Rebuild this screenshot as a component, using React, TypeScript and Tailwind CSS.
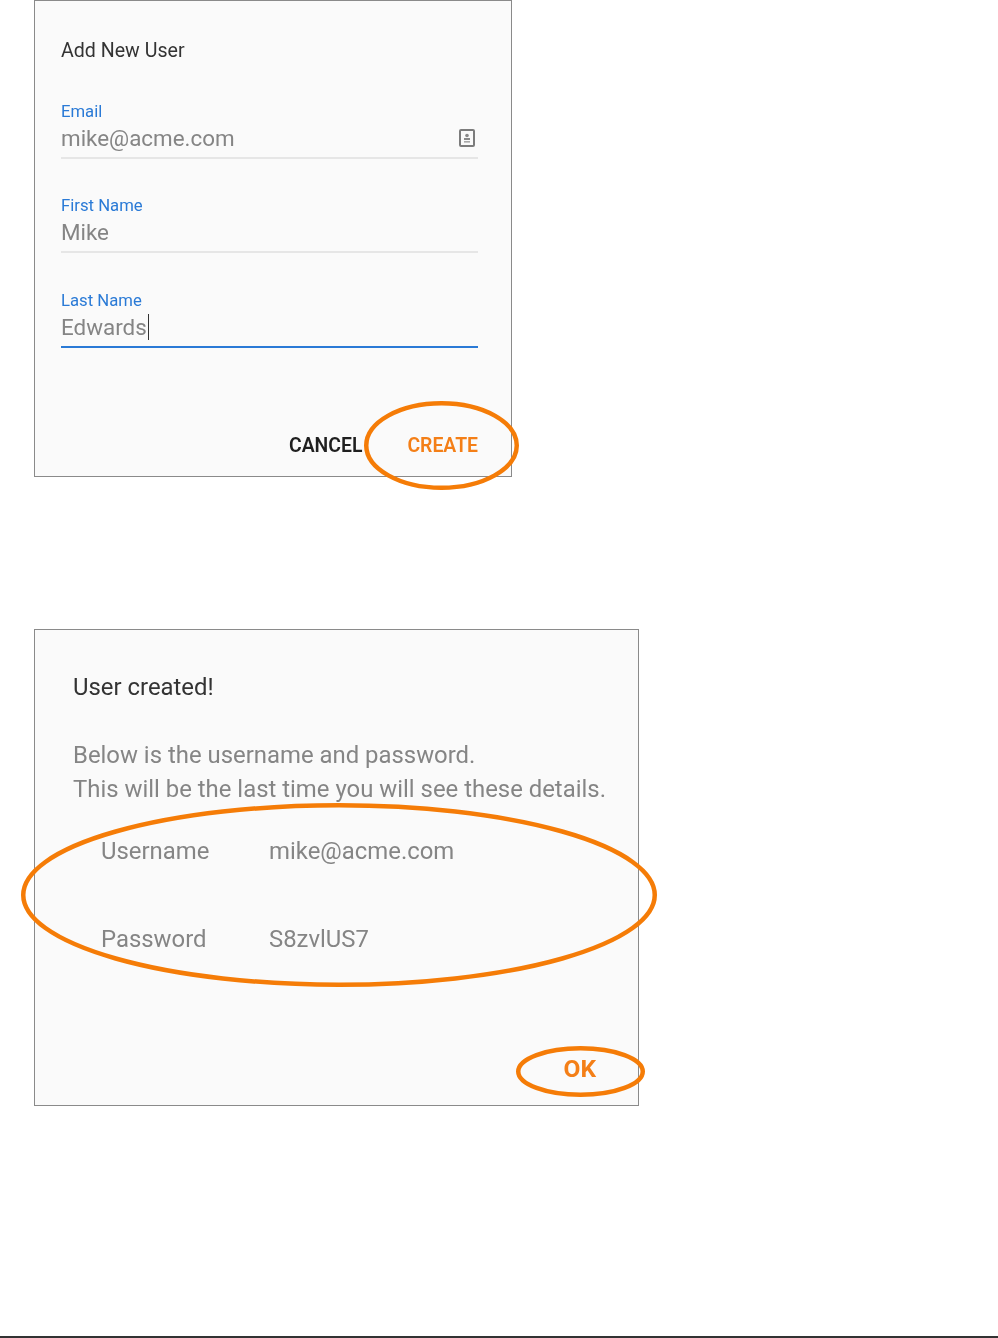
const Field = ({ label, value, active, icon, caret }: { label: string; value: string; active?: boolean; icon?: boolean; caret?: boolean }) => (
  <div className="flex flex-col">
    <div className="h-[23px] text-[16.7px] leading-[23px] text-[#2a7ad6]">{label}</div>
    <div className="flex h-[30px] items-center justify-between text-[22.4px] leading-[30px] text-[#858585]">
      <span className="flex items-center">
        {value}
        {caret && <span className="ml-px inline-block h-[26px] w-px bg-[#333333]" />}
      </span>
      {icon && (
        <svg width="18" height="20" viewBox="0 0 18 20" className="mr-[2px]">
          <rect x="2" y="2" width="14" height="16" rx="1" fill="none" stroke="#7c7c7c" strokeWidth="2" />
          <circle cx="9" cy="7.5" r="1.8" fill="#8a8a8a" />
          <rect x="6" y="10" width="6" height="2" fill="#8a8a8a" />
          <rect x="6" y="13" width="6" height="1.6" fill="#a8a8a8" />
        </svg>
      )}
    </div>
    <div className={active ? "mt-[4px] h-[2px] bg-[#2a7ad6]" : "mt-[4px] h-[2px] bg-[#e6e6e6]"} />
  </div>
);

const Ring = ({ className, w, h, sw }: { className: string; w: number; h: number; sw: number }) => (
  <svg width={w} height={h} viewBox={`0 0 ${w} ${h}`} className={`absolute ${className}`}>
    <ellipse cx={w / 2} cy={h / 2} rx={w / 2 - sw / 2} ry={h / 2 - sw / 2} fill="none" stroke="#f57c07" strokeWidth={sw} />
  </svg>
);

export default function App() {
  return (
    <div className="relative h-[1338px] w-[998px] bg-white font-['Roboto',sans-serif]">
      <div className="ml-[34px] flex h-[477px] w-[478px] flex-col border border-[#8a8a8a] bg-[#fafafa] pl-[26px] pr-[33px]">
        <div className="mt-[37px] h-[26px] text-[19.6px] leading-[26px] text-[#333333] blur-[0.4px]">Add New User</div>
        <div className="mt-[36px] flex flex-col gap-[35.3px] blur-[0.4px]">
          <Field label="Email" value="mike@acme.com" icon />
          <Field label="First Name" value="Mike" />
          <Field label="Last Name" value="Edwards" active caret />
        </div>
        <div className="mt-[85px] flex justify-end gap-[45px] text-[19.4px] font-semibold leading-[26px] blur-[0.4px]">
          <span className="text-[#1f1f1f]">CANCEL</span>
          <span className="text-[#f47f17]">CREATE</span>
        </div>
      </div>
      <div className="ml-[34px] mt-[152px] flex h-[477px] w-[605px] flex-col border border-[#8a8a8a] bg-[#fafafa] pl-[38px]">
        <div className="mt-[43px] h-[28px] text-[23.9px] leading-[28px] text-[#333333] blur-[0.4px]">User created!</div>
        <div className="mt-[37px] text-[23.9px] leading-[34px] text-[#858585] blur-[0.4px]">
          <div>Below is the username and password.</div>
          <div>This will be the last time you will see these details.</div>
        </div>
        <div className="ml-[27px] mt-[28px] grid grid-cols-[169px_1fr] gap-y-[54px] text-[23.9px] leading-[34px] text-[#858585] blur-[0.4px]">
          <span className="ml-px">Username</span>
          <span>mike@acme.com</span>
          <span className="ml-px">Password</span>
          <span>S8zvlUS7</span>
        </div>
        <div className="mr-[42px] mt-[97px] text-right text-[24.5px] font-bold leading-[32px] text-[#f47f17] blur-[0.4px]">OK</div>
      </div>
      <div className="absolute bottom-0 left-0 h-[2px] w-full bg-[#333333]" />
      <Ring className="left-[364px] top-[401px] blur-[0.3px]" w={155} h={89} sw={4.5} />
      <Ring className="left-[21px] top-[803px] blur-[0.3px]" w={636} h={184} sw={4.5} />
      <Ring className="left-[516px] top-[1046px] blur-[0.3px]" w={129} h={51} sw={4.5} />
    </div>
  );
}
